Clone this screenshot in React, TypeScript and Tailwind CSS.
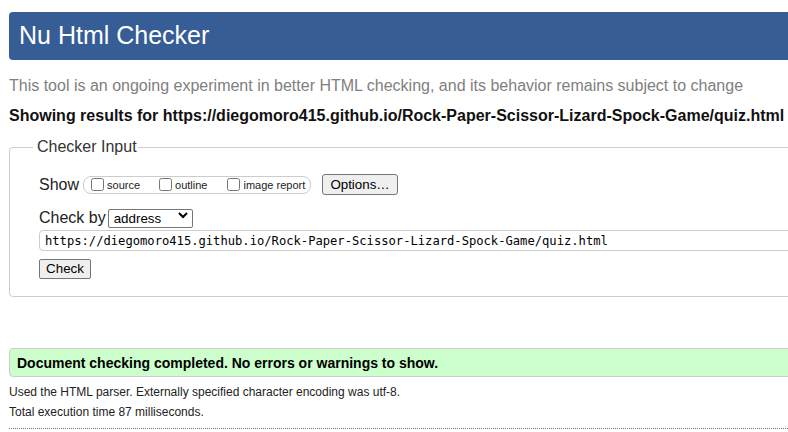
import { useState } from 'react'

const sans = "font-['Liberation_Sans',Arial,sans-serif]"

const CheckItem = ({ label, gap }: { label: string; gap: string }) => {
    const [on, setOn] = useState(false)
    return (
        <label className={`flex items-center ${gap}`}>
            <input
                type="checkbox"
                checked={on}
                onChange={() => setOn(!on)}
                className="m-0 h-[13px] w-[13px]"
            />
            <span className="ml-[3px] mt-[1px] text-[11px] leading-[13px] text-[#222]">{label}</span>
        </label>
    )
}

const App = () => {
    const [url, setUrl] = useState('https://diegomoro415.github.io/Rock-Paper-Scissor-Lizard-Spock-Game/quiz.html')

    return (
        <div className={`h-[432px] w-[788px] overflow-hidden bg-white ${sans}`}>
            <div className="w-[840px] pl-[9px] pt-[12px]">
                <div className="flex h-[48px] items-center rounded-[4px] bg-[#365d95] pb-[2px] pl-[10px]">
                    <h1 className="text-[25px] leading-[28px] text-white">Nu Html Checker</h1>
                </div>

                <p className="mt-[17px] text-[16px] leading-[18px] text-[#808080]">
                    This tool is an ongoing experiment in better HTML checking, and its behavior remains subject to change
                </p>
                <p className="mt-[12px] text-[16px] font-bold leading-[18px] text-[#111]">
                    Showing results for https://diegomoro415.github.io/Rock-Paper-Scissor-Lizard-Spock-Game/quiz.html
                </p>

                <fieldset className="mt-[13px] rounded-[4px] border border-[#cccccc] pb-[17px] pl-[29px] pt-[18px]">
                    <legend className="ml-[-6px] pl-[4px] pr-[1px] text-[16px] leading-[18px] text-[#333]">
                        Checker Input
                    </legend>

                    <div className="flex h-[21px] items-center">
                        <span className="text-[16px] leading-[18px] text-[#222]">Show</span>
                        <div className="ml-[4px] flex h-[18px] w-[228px] items-center rounded-[8px] border border-[#cccccc] pl-[7px]">
                            <CheckItem label="source" gap="mr-[19px]" />
                            <CheckItem label="outline" gap="mr-[20px]" />
                            <CheckItem label="image report" gap="" />
                        </div>
                        <button
                            type="button"
                            className="ml-[11px] h-[21px] w-[76px] rounded-[3px] border border-[#767676] bg-[#efefef] text-[13.33px] text-black"
                        >
                            Options…
                        </button>
                    </div>

                    <div className="mt-[13px] flex h-[19px] items-center">
                        <span className="text-[16px] leading-[18px] text-[#222]">Check by</span>
                        <div className="relative ml-[2px]">
                            <select className="h-[19px] w-[85px] appearance-none rounded-[2px] border border-[#767676] bg-white pl-[5px] text-[13.33px] leading-[17px] text-black">
                                <option>address</option>
                                <option>file upload</option>
                                <option>text input</option>
                            </select>
                            <svg
                                className="pointer-events-none absolute right-[5px] top-[6px]"
                                width="10"
                                height="7"
                                viewBox="0 0 10 7"
                            >
                                <polyline points="1,1 5,5 9,1" fill="none" stroke="#000" strokeWidth="2" />
                            </svg>
                        </div>
                    </div>

                    <input
                        type="text"
                        value={url}
                        onChange={(e) => setUrl(e.target.value)}
                        className="mt-[3px] block h-[21px] w-[790px] rounded-[4px] border border-[#cccccc] pl-[5px] font-['DejaVu_Sans_Mono',monospace] text-[12.15px] text-black outline-none"
                    />

                    <button
                        type="button"
                        className="mt-[8px] block h-[20px] w-[52px] rounded-[2px] border border-[#767676] bg-[#efefef] text-[13.33px] leading-[18px] text-black"
                    >
                        Check
                    </button>
                </fieldset>

                <div className="mt-[51px] flex h-[29px] items-center rounded-l-[4px] border border-[#cccccc] bg-[#ccffcc] pl-[7px]">
                    <p className="text-[14px] font-bold leading-[16px] text-black">
                        Document checking completed. No errors or warnings to show.
                    </p>
                </div>

                <p className="mt-[8px] text-[12px] leading-[14px] text-[#222]">
                    Used the HTML parser. Externally specified character encoding was utf-8.
                </p>
                <p className="mt-[6px] text-[12px] leading-[14px] text-[#222]">
                    Total execution time 87 milliseconds.
                </p>
                <div className="mt-[9px] border-t border-dotted border-[#777]" />
            </div>
        </div>
    )
}

export default App
